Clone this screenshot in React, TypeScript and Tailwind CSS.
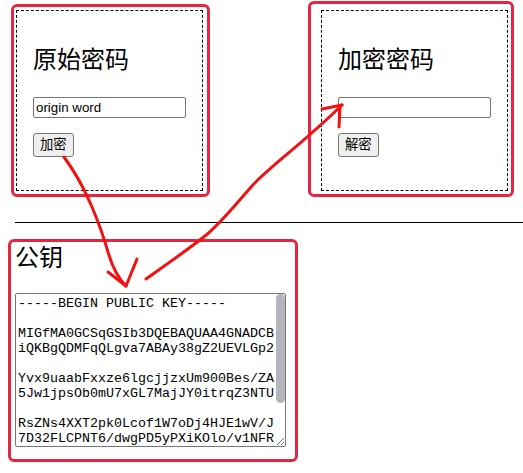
const PUBLIC_KEY = [
  "-----BEGIN PUBLIC KEY-----",
  "",
  "MIGfMA0GCSqGSIb3DQEBAQUAA4GNADCB",
  "iQKBgQDMFqQLgva7ABAy38gZ2UEVLGp2",
  "",
  "Yvx9uaabFxxze6lgcjjzxUm900Bes/ZA",
  "5Jw1jpsOb0mU7xGL7MajJY0itrqZ3NTU",
  "",
  "RsZNs4XXT2pk0Lcof1W7oDj4HJE1wV/J",
  "7D32FLCPNT6/dwgPD5yPXiKOlo/v1NFR",
  "",
  "3kYpQ8sTw2LmHnVbXQIDAQAB",
  "",
  "-----END PUBLIC KEY-----",
].join("\n");

interface CryptoBoxProps {
  title: string;
  value: string;
  action: string;
}

const CryptoBox = ({ title, value, action }: CryptoBoxProps) => {
  return (
    <div className="w-[187px] h-[181px] border border-dashed border-black px-4 pt-[35px]">
      <h2 className="text-[24px] leading-[28px] font-normal">{title}</h2>
      <input
        type="text"
        defaultValue={value}
        className="mt-[23px] block w-[153px] h-[21px] rounded-[2px] border border-[#767676] bg-white px-[2px] text-[13.33px] leading-[19px] outline-none"
      />
      <button className="mt-[15px] block h-[24px] rounded-[3px] border border-[#767676] bg-[#efefef] px-[6px] text-[13.33px] leading-[20px]">
        {action}
      </button>
    </div>
  );
};

const Annot = ({ className, children }: { className: string; children: React.ReactNode }) => (
  <div className={`rounded-[6px] border-[3px] border-[#e62540] ${className}`}>{children}</div>
);

export default function App() {
  return (
    <div className="relative w-[523px] h-[473px] overflow-hidden bg-white text-black font-['Liberation_Sans','Noto_Sans_CJK_SC',sans-serif]">
      <div className="flex items-start justify-between pl-[11px] pr-[9px]">
        <Annot className="mt-[4px] pl-[2px] pr-[4px] pt-[3px] pb-[3px]">
          <CryptoBox title="原始密码" value="origin word" action="加密" />
        </Annot>
        <Annot className="mt-[1px] pl-[10px] pr-[3px] pt-[6px] pb-[3px]">
          <CryptoBox title="加密密码" value="" action="解密" />
        </Annot>
      </div>

      <hr className="ml-[15px] mt-[25px] border-t border-black" />

      <section className="ml-[8px] mt-[16px] w-[290px] rounded-[6px] border-[3px] border-[#e62540] pl-[4px] pr-[9px] pt-[2px] pb-[12px]">
        <h2 className="text-[24px] leading-[28px] font-normal">公钥</h2>
        <div className="relative mt-[21px] w-[271px] h-[154px]">
          <textarea
            defaultValue={PUBLIC_KEY}
            spellCheck={false}
            className="block w-[271px] h-[154px] resize overflow-hidden whitespace-pre rounded-[2px] border border-[#767676] bg-white pl-[2px] pr-[11px] py-[2px] font-['Liberation_Mono',monospace] text-[13.33px] leading-[15px] outline-none"
          />
          {/* scrollbar thumb */}
          <div className="pointer-events-none absolute right-[1px] top-[1px] w-[9px] h-[109px] rounded-full bg-[#b4b4bd]" />
        </div>
      </section>

      {/* red hand-drawn arrows */}
      <svg
        className="pointer-events-none absolute inset-0"
        width={523}
        height={473}
        viewBox="0 0 523 473"
        fill="none"
        stroke="#f21010"
        strokeWidth={3}
        strokeLinecap="round"
        strokeLinejoin="round"
      >
        <path d="M64 157 C72 168 84 188 92 207 S104 238 108 252 S118 278 126 286" />
        <path d="M108 272 L126 286 L137 259" />
        <path d="M146 279 C170 262 190 248 205 236 S235 205 252 186 S300 146 342 105" />
        <path d="M322 109 L342 105 M340 107 L339 127" />
      </svg>
    </div>
  );
}
